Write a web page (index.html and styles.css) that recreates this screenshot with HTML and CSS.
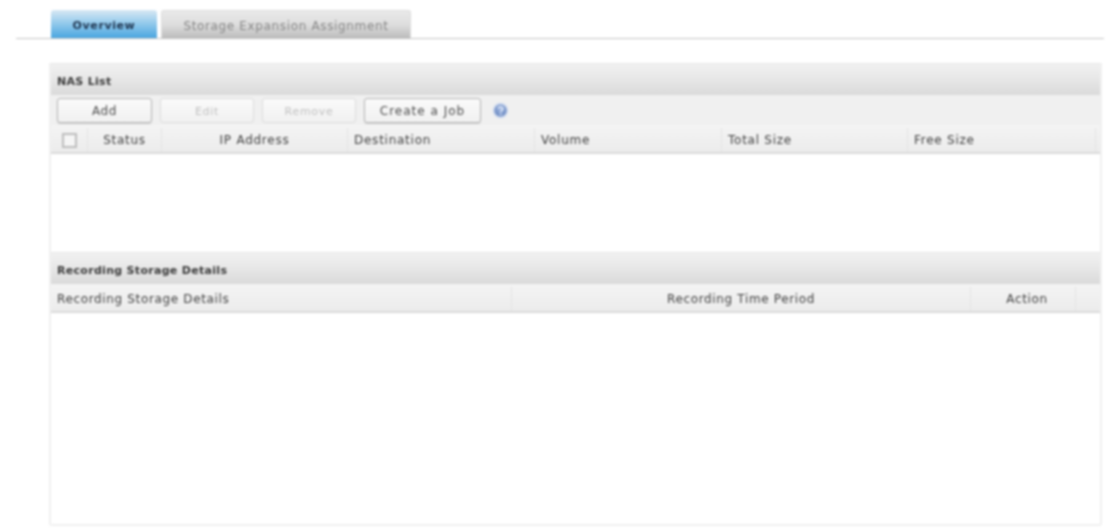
FILE: index.html
```html
<!DOCTYPE html>
<html lang="en">
<head>
<meta charset="utf-8">
<title>NAS Overview</title>
<link rel="stylesheet" href="styles.css">
</head>
<body>
<div class="page">
  <nav class="tabs">
    <div class="tab tab-active">Overview</div>
    <div class="tab tab-idle">Storage Expansion Assignment</div>
  </nav>
  <main class="panel">
    <h2 class="band band-first">NAS List</h2>
    <div class="toolbar">
      <button class="btn btn-add">Add</button>
      <button class="btn btn-off">Edit</button>
      <button class="btn btn-off">Remove</button>
      <button class="btn btn-job">Create a Job</button>
      <svg class="help" viewBox="0 0 16 16" width="17" height="17" aria-hidden="true">
        <defs>
          <radialGradient id="helpFill" cx="50%" cy="40%" r="60%">
            <stop offset="0" stop-color="#9db4df"/>
            <stop offset="1" stop-color="#6685bd"/>
          </radialGradient>
        </defs>
        <circle cx="8" cy="8" r="6.5" fill="url(#helpFill)" stroke="#cdd9ee" stroke-width="1.5"/>
        <path d="M5.8 6.3C6 5 7 4.6 8 4.6c1.3 0 2.2.8 2.2 1.8 0 1.5-2 1.6-2 3.1" fill="none" stroke="#e6eefb" stroke-width="1.4"/>
        <circle cx="8.2" cy="11.4" r=".9" fill="#e6eefb"/>
      </svg>
    </div>
    <div class="head head-nas">
      <div class="cell cell-check"><span class="check"></span></div>
      <div class="cell cell-center">Status</div>
      <div class="cell cell-center">IP Address</div>
      <div class="cell">Destination</div>
      <div class="cell">Volume</div>
      <div class="cell">Total Size</div>
      <div class="cell">Free Size</div>
      <div class="cell"></div>
    </div>
    <div class="body-nas"></div>
    <h2 class="band">Recording Storage Details</h2>
    <div class="head head-rec">
      <div class="cell">Recording Storage Details</div>
      <div class="cell cell-center">Recording Time Period</div>
      <div class="cell cell-center cell-action">Action</div>
      <div class="cell"></div>
    </div>
  </main>
</div>
</body>
</html>
```
FILE: styles.css
```css
* { box-sizing: border-box; }
html, body { margin: 0; padding: 0; background: #fff; }
body {
  width: 1106px;
  height: 529px;
  overflow: hidden;
  font-family: "DejaVu Sans", sans-serif;
  font-size: 12px;
  color: #3f3f3f;
}
.page { padding: 10px 2px 0 16px; filter: blur(0.8px); }
.tabs {
  display: flex;
  gap: 4px;
  height: 29px;
  padding-left: 35px;
  border-bottom: 1px solid #c4c4c4;
}
.tab {
  height: 28px;
  border-radius: 3px 3px 0 0;
  display: flex;
  align-items: center;
  justify-content: center;
  padding-top: 3px;
}
.tab-active {
  width: 106px;
  background: linear-gradient(#d8e8f3 0, #a5d2ee 35%, #4aa6e0 100%);
  color: #1f3550;
  font-size: 11px;
  letter-spacing: .6px;
  font-weight: 700;
}
.tab-idle {
  width: 250px;
  background: linear-gradient(#e9e9e9 0, #dedede 50%, #bcbcbc 100%);
  border: 1px solid #dcdcdc;
  border-bottom: 0;
  color: #858585;
  font-size: 12px;
  letter-spacing: .65px;
}
.panel {
  margin: 24px 0 0 33px;
  width: 1053px;
  height: 463px;
  border: 2px solid #f0f0f0;
  border-top: 0;
  border-radius: 0 0 3px 3px;
}
.band {
  margin: 0;
  height: 32px;
  padding: 3px 0 0 6px;
  display: flex;
  align-items: center;
  font-size: 11px;
  font-weight: 700;
  letter-spacing: .3px;
  color: #3a3a3a;
  background: linear-gradient(#f1f1f1 0, #e9e9e9 40%, #dadada 100%);
  border-top: 1px solid #e6e6e6;
}
.band + .head { letter-spacing: .65px; }
.toolbar {
  height: 30px;
  display: flex;
  align-items: center;
  gap: 8px;
  padding: 1px 0 0 6px;
  background: #f0f0f0;
}
.btn {
  height: 25px;
  width: 94px;
  padding: 1px 0 0;
  font: 12px "DejaVu Sans", sans-serif;
  letter-spacing: .6px;
  color: #4d4d4d;
  background: linear-gradient(#fafafa, #f1f1f1);
  border: 1px solid #b5b5b5;
  border-radius: 3px;
  box-shadow: 0 1px 1px #ccc;
}
.btn-add { width: 95px; }
.btn-job { width: 117px; letter-spacing: 1px; }
.btn-off {
  color: #c0c0c0;
  font-size: 11px;
  letter-spacing: .7px;
  border-color: #dcdcdc;
  box-shadow: none;
}
.help { margin-left: 3px; }
.head {
  display: grid;
  height: 29px;
  padding-top: 3px;
  background: linear-gradient(#f4f4f4, #ececec);
  border-bottom: 2px solid #dadada;
  letter-spacing: .75px;
}
.head-nas { grid-template-columns: 37px 74px 186px 187px 187px 186px 188px 1fr; }
.head-rec { grid-template-columns: 461px 459px 105px 1fr; }
.cell {
  display: flex;
  align-items: center;
  padding-left: 6px;
  border-right: 1px solid #e4e4e4;
  white-space: nowrap;
}
.cell:last-child { border-right: 0; }
.cell-center { justify-content: center; padding-left: 0; }
.cell-check { justify-content: center; padding-left: 0; }
.cell-action { padding-left: 8px; }
.check {
  width: 15px;
  height: 15px;
  background: #f5f5f5;
  border: 2px solid #bdbdbd;
}
.body-nas { height: 98px; background: #fff; }
```
